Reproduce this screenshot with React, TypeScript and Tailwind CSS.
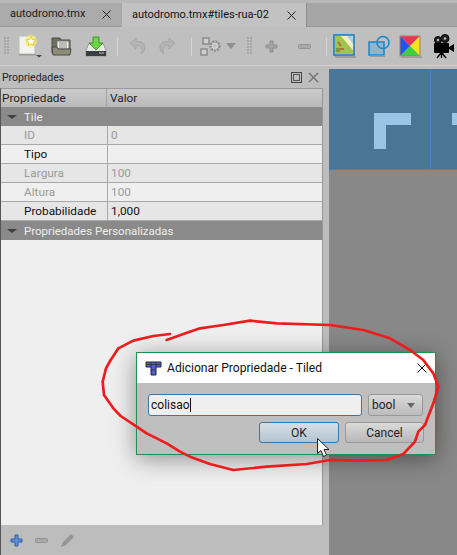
import React from "react";

const Grip = () => (
  <svg width="5" height="18" className="shrink-0">
    {[0,3,6,9,12,15].map(y => [0,3].map(x => <rect key={`${x}-${y}`} x={x} y={y} width="2" height="2" fill="#a6a6a6" />))}
  </svg>
);
const Sep = () => <div className="w-px h-[19px] bg-[#d6d6d6] shrink-0" />;

const NewIcon = () => (
  <svg width="24" height="24" viewBox="0 0 24 24" className="shrink-0">
    <path d="M1 2h16v18H1z" fill="#f2f2ee" stroke="#bdbdb5" />
    <rect x="1" y="20" width="17" height="1.5" fill="#9a9a9a" />
    <circle cx="13" cy="7" r="6" fill="#f5ee6a" opacity="0.7" />
    <path d="M13 2.5l1.5 3 3.3.4-2.4 2.3.6 3.3-3-1.6-3 1.6.6-3.3-2.4-2.3 3.3-.4z" fill="#fff" stroke="#e5cf1f" />
    <path d="M18 21h6l-3 2.5z" fill="#444" />
  </svg>
);
const OpenIcon = () => (
  <svg width="21" height="21" viewBox="0 0 21 21" className="shrink-0">
    <path d="M1 2h8l1 2h9v13H1z" fill="#6f6f5f" stroke="#4c4c42" />
    <rect x="6" y="5" width="12" height="8" fill="#eeeeea" stroke="#777" />
    <path d="M8 7h8M8 9h8M8 11h8" stroke="#888" />
    <path d="M1 11h5l1 2h13l-1 6H2z" fill="#8c8c78" stroke="#4c4c42" />
  </svg>
);
const SaveIcon = () => (
  <svg width="22" height="21" viewBox="0 0 22 21" className="shrink-0">
    <path d="M4 7h14l3 7v6H1v-6z" fill="#e8e8e4" stroke="#999" />
    <rect x="1" y="15" width="20" height="5" fill="#3b3f3f" />
    <path d="M14 17h5" stroke="#bbb" />
    <path d="M8 1h6v6h4l-7 7-7-7h4z" fill="#6fd44a" stroke="#3d9a2a" />
  </svg>
);
const Undo = ({ flip }: { flip?: boolean }) => (
  <svg width="17" height="18" viewBox="0 0 17 18" className="shrink-0" style={flip ? { transform: "scaleX(-1)" } : undefined}>
    <path d="M7 1L1 6.5 7 12V8.5c4 0 6 1 6 5 0 1-.5 2-1 3 3-1 4-3.5 4-6.500C16 6 12 4.500 7 4.500z" fill="#b4b4b4" stroke="#a6a6a6" />
  </svg>
);
const Gears = () => (
  <svg width="22" height="20" viewBox="0 0 22 20" className="shrink-0" fill="none">
    <rect x="3" y="2" width="6" height="6" fill="#cfcfcf" stroke="#8d8d8d" strokeWidth="1.500" />
    <rect x="1" y="13" width="6" height="6" fill="#cfcfcf" stroke="#8d8d8d" strokeWidth="1.500" />
    <circle cx="15" cy="10" r="4.500" fill="#cfcfcf" stroke="#8d8d8d" strokeWidth="2.500" strokeDasharray="2 1" />
    <circle cx="15" cy="10" r="1.500" fill="#bdbdbd" />
  </svg>
);
const Plus = ({ c = "#a3a3a3", s = "#8e8e8e" }: { c?: string; s?: string }) => (
  <svg width="13" height="13" viewBox="0 0 13 13" className="shrink-0">
    <path d="M5 1h3v4h4v3H8v4H5V8H1V5h4z" fill={c} stroke={s} />
  </svg>
);
const Minus = () => (
  <svg width="13" height="5" viewBox="0 0 13 5" className="shrink-0">
    <rect x="0.500" y="0.500" width="12" height="4" rx="1" fill="#a8a8a8" stroke="#939393" />
  </svg>
);
const TilesetIcon = () => (
  <svg width="23" height="24" viewBox="0 0 23 24" className="shrink-0">
    <rect x="1" y="1" width="20" height="20" fill="#dfeac0" stroke="#1477bb" strokeWidth="1.500" />
    <path d="M2 2h6l12 14v4H2z" fill="#9fc64a" />
    <path d="M8 2h6l6 8v6z" fill="#f4ecc8" />
    <path d="M14 2h6v8z" fill="#9fd3ee" />
    <path d="M5 8l3 4M7 15h4" stroke="#c8503a" strokeWidth="1.500" />
    <rect x="3" y="14" width="4" height="4" fill="#7a9a3a" />
    <rect x="2" y="22" width="21" height="2" fill="#9d9d9d" />
  </svg>
);
const ShapeIcon = () => (
  <svg width="22" height="22" viewBox="0 0 22 22" className="shrink-0" fill="none">
    <rect x="1" y="7" width="15" height="13" fill="#90b5d0" stroke="#1a86c8" strokeWidth="1.500" />
    <circle cx="15" cy="7.500" r="6" stroke="#1a86c8" strokeWidth="1.500" />
    <rect x="2" y="20.500" width="15" height="1.500" fill="#9a9a9a" />
  </svg>
);
const ColorIcon = () => (
  <svg width="23" height="23" viewBox="0 0 23 23" className="shrink-0">
    <path d="M1 1h20L11 11z" fill="#ee3355" />
    <path d="M21 1v20L11 11z" fill="#f2e41e" />
    <path d="M21 21H1l10-10z" fill="#3fcf3f" />
    <path d="M1 21V1l10 10z" fill="#2255ee" />
    <rect x="1" y="1" width="20" height="20" fill="none" stroke="#b07a6a" />
    <rect x="2" y="21.500" width="21" height="1.500" fill="#9d9d9d" />
  </svg>
);
const Camera = () => (
  <svg width="23" height="25" viewBox="0 0 23 25" className="shrink-0">
    <circle cx="6" cy="6" r="3.500" fill="#222" stroke="#000" />
    <circle cx="13" cy="4.500" r="4" fill="#222" stroke="#000" />
    <circle cx="6" cy="6" r="1.200" fill="#bbb" />
    <circle cx="13" cy="4.500" r="1.300" fill="#bbb" />
    <rect x="2" y="9" width="15" height="10" rx="1" fill="#000" />
    <path d="M17 13l5-3v8l-5-3z" fill="#000" />
    <path d="M9 19l-4 5M10 19l4 5M9.500 19v5" stroke="#000" strokeWidth="1.300" />
  </svg>
);

const Row = ({ k, v, off, alt }: { k: string; v: string; off?: boolean; alt?: boolean }) => (
  <div className={`flex h-[19px] items-center border-b border-[#a9a9a9] text-[11.800px] ${alt ? "bg-[#efefef]" : "bg-[#e6e6e6]"} ${off ? "text-[#9a9a9a]" : "text-[#111]"}`}>
    <div className="w-[107px] h-full pl-[23px] border-r border-[#a9a9a9] flex items-center leading-none pt-[2px]">{k}</div>
    <div className="pl-[3px] flex items-center leading-none pt-[2px]">{v}</div>
  </div>
);
const Section = ({ label }: { label: string }) => (
  <div className="flex h-[19px] items-center bg-[#8a8a8a] text-[11.500px] text-[#eeeeee] relative">
    <div className="w-0 h-0 ml-[6px] border-l-[5px] border-r-[5px] border-t-[4px] border-l-transparent border-r-transparent border-t-[#3f3f3f]" />
    <span className="ml-[7px] leading-none pt-[2px]">{label}</span>
  </div>
);

export default function App() {
  return (
    <div className="relative w-[457px] h-[555px] overflow-hidden flex flex-col bg-[#8a8a8a] font-['Roboto','Open_Sans',sans-serif] text-[#111]">
      {/* tabs */}
      <div className="h-[27px] shrink-0 flex items-end bg-[#a6a6a6] border-t-[3px] border-[#b8b8b8]">
        <div className="w-[121px] h-[24px] pl-[10px] pr-[10px] flex items-center justify-between bg-[#ababab] text-[11px] text-[#1a1a1a] border-b border-[#9a9a9a] whitespace-nowrap">
          <span>autodromo.tmx</span>
          <svg width="9" height="9" viewBox="0 0 9 9"><path d="M.5.5l8 8M8.500.500l-8 8" stroke="#222" strokeWidth="1" /></svg>
        </div>
        <div className="w-[184px] h-[24px] ml-px pl-[10px] pr-[10px] flex items-center justify-between bg-[#c2c2c2] text-[11px] text-[#111] whitespace-nowrap">
          <span>autodromo.tmx#tiles-rua-02</span>
          <svg width="9" height="9" viewBox="0 0 9 9"><path d="M.5.5l8 8M8.500.500l-8 8" stroke="#222" strokeWidth="1" /></svg>
        </div>
        <div className="flex-1 h-[24px] border-l border-[#8f8f8f] border-b border-b-[#9a9a9a]" />
      </div>
      {/* toolbar */}
      <div className="h-[39px] shrink-0 flex items-center bg-[#bfbfbf] pl-[4px] border-b border-[#d2d2d2]">
        <Grip />
        <div className="ml-[9px]"><NewIcon /></div>
        <div className="ml-[9px]"><OpenIcon /></div>
        <div className="ml-[13px]"><SaveIcon /></div>
        <div className="ml-[10px]"><Sep /></div>
        <div className="ml-[11px]"><Undo /></div>
        <div className="ml-[13px]"><Undo flip /></div>
        <div className="ml-[15px]"><Sep /></div>
        <div className="ml-[8px]"><Gears /></div>
        <div className="ml-[4px] w-0 h-0 border-l-[5px] border-r-[5px] border-t-[6px] border-l-transparent border-r-transparent border-t-[#8f8f8f]" />
        <div className="ml-[11px]"><Grip /></div>
        <div className="ml-[13px]"><Plus /></div>
        <div className="ml-[20px]"><Minus /></div>
        <div className="ml-[15px]"><Sep /></div>
        <div className="ml-[6px]"><TilesetIcon /></div>
        <div className="ml-[12px]"><ShapeIcon /></div>
        <div className="ml-[9px]"><ColorIcon /></div>
        <div className="ml-[10px]"><Camera /></div>
      </div>
      {/* main */}
      <div className="flex-1 flex min-h-0">
        <div className="w-[329px] shrink-0 flex flex-col bg-[#bdbdbd] pr-[6px]">
          <div className="h-[22px] shrink-0 flex items-center pl-[2px] pr-[4px] text-[10.500px] justify-between text-[#222] pt-[2px]">
            <span>Propriedades</span>
            <div className="flex items-center gap-[6px] mb-[2px]">
              <svg width="11" height="11" viewBox="0 0 11 11" fill="none"><rect x=".5" y=".5" width="10" height="10" stroke="#444" /><rect x="2.500" y="2.500" width="6" height="6" stroke="#555" /></svg>
              <svg width="11" height="11" viewBox="0 0 11 11" fill="none"><path d="M1 1l9 9M10 1l-9 9" stroke="#777" strokeWidth="1.500" /></svg>
            </div>
          </div>
          <div className="flex-1 flex flex-col border-l border-[#555] border-r border-r-[#999] border-t border-t-[#999] min-h-0">
            <div className="h-[18px] shrink-0 flex items-center text-[11.800px] bg-gradient-to-b from-[#cbcbcb] to-[#b9b9b9] text-[#222]">
              <div className="w-[106px] pl-px h-full flex items-center border-r border-[#a3a3a3] leading-none pt-[2px]">Propriedade</div>
              <div className="pl-[3px] leading-none pt-[2px]">Valor</div>
            </div>
            <Section label="Tile" />
            <Row k="ID" v="0" off />
            <Row k="Tipo" v="" alt />
            <Row k="Largura" v="100" off />
            <Row k="Altura" v="100" off alt />
            <Row k="Probabilidade" v="1,000" />
            <Section label="Propriedades Personalizadas" />
            <div className="flex-1 bg-[#efefef]" />
          </div>
          <div className="h-[30px] shrink-0 flex items-center pl-[9px] border-l border-[#555] bg-[#bdbdbd]">
            <Plus c="#5f8fd0" s="#2a5ea8" />
            <div className="ml-[12px]"><Minus /></div>
            <svg width="15" height="15" viewBox="0 0 15 15" className="ml-[12px]"><path d="M1 14l2-5 8-8 3 3-8 8z" fill="#969696" /></svg>
          </div>
        </div>
        <div className="flex-1 pt-[3px] bg-[#bdbdbd] min-w-0 flex flex-col">
          <div className="flex-1 bg-[#888888]">
            <svg width="128" height="101" viewBox="0 0 128 101" className="block">
              <rect width="128" height="100" fill="#4a7696" />
              <rect y="100" width="128" height="1" fill="#3d86c0" />
              <rect x="101" width="1" height="100" fill="#3d86c0" />
              <path d="M45 44h37v12H57v24H45z" fill="#9ac5e6" />
              <rect x="123" y="44" width="5" height="12" fill="#9ac5e6" />
            </svg>
          </div>
        </div>
      </div>

      {/* dialog */}
      <div className="absolute left-[136px] top-[352px] w-[300px] h-[103px] flex flex-col border border-[#1f9050] bg-[#bfbfbf] shadow-[0_4px_22px_rgba(0,0,0,0.4)]">
        <div className="h-[30px] shrink-0 bg-white flex items-center pl-[8px] pr-[8px] text-[12.100px] text-[#111]">
          <svg width="17" height="15" viewBox="0 0 17 15" className="shrink-0">
            <path d="M1 1h15v5h-5v8H6V6H1z" fill="#5a5fc8" stroke="#22243a" />
            <path d="M6 1v5M11 1v5M1 3.500h15M6 9h5" stroke="#22243a" strokeWidth=".7" />
          </svg>
          <span className="ml-[5px] flex-1">Adicionar Propriedade - Tiled</span>
          <svg width="10" height="10" viewBox="0 0 10 10"><path d="M.5.5l9 9M9.500.500l-9 9" stroke="#111" strokeWidth="1" /></svg>
        </div>
        <div className="flex-1 px-[11px] pt-[11px] flex flex-col gap-[6px]">
          <div className="flex gap-[6px] h-[22px]">
            <div className="w-[214px] h-full rounded-[3px] border border-[#3a78a8] bg-[#efefef] flex items-center pl-[2px] text-[12px] leading-none text-[#111]">
              <span>colisao</span><span className="w-px h-[14px] bg-[#111]" />
            </div>
            <div className="w-[55px] h-full rounded-[3px] border border-[#999] bg-gradient-to-b from-[#dadada] to-[#bcbcbc] flex items-center justify-between pl-[3px] pr-[7px] text-[12px] leading-none text-[#222]">
              <span>bool</span>
              <div className="w-0 h-0 border-l-[4px] border-r-[4px] border-t-[5px] border-l-transparent border-r-transparent border-t-[#666]" />
            </div>
          </div>
          <div className="flex justify-end gap-[6px] h-[21px]">
            <div className="w-[80px] h-full rounded-[3px] border border-[#3a78a8] bg-gradient-to-b from-[#d6e0e8] to-[#b4c4d0] flex items-center justify-center text-[12px] leading-none text-[#222]">OK</div>
            <div className="w-[79px] h-full rounded-[3px] border border-[#999] bg-gradient-to-b from-[#dadada] to-[#b8b8b8] flex items-center justify-center text-[12px] leading-none text-[#222]">Cancel</div>
          </div>
        </div>
      </div>

      {/* red hand-drawn circle */}
      <svg width="367" height="200" viewBox="0 0 1101 600" fill="none" className="absolute left-[90px] top-[310px]">
        <path d="M240 72L190 78L130 92L85 115L72 135L62 150L48 175L38 215L42 255L70 295L92 318L140 350L170 370L230 400L270 425L300 440L360 462L430 480L530 470L650 462L720 450L800 452L890 450L940 432L975 395L985 365L1005 345L1030 280L1045 230L1030 190L1000 150L960 120L900 85L820 60L720 45L560 40L480 32L400 45L330 55L280 72L230 90" stroke="#ee1c1c" strokeWidth="8" strokeLinejoin="round" strokeLinecap="round" />
      </svg>

      {/* mouse cursor */}
      <svg width="13" height="20" viewBox="0 0 13 20" className="absolute left-[317px] top-[438px]">
        <path d="M.5.500v15l3.500-3 2.500 6 3-1.300-2.500-5.700h5z" fill="#fff" stroke="#222" strokeWidth="1" />
      </svg>
    </div>
  );
}
